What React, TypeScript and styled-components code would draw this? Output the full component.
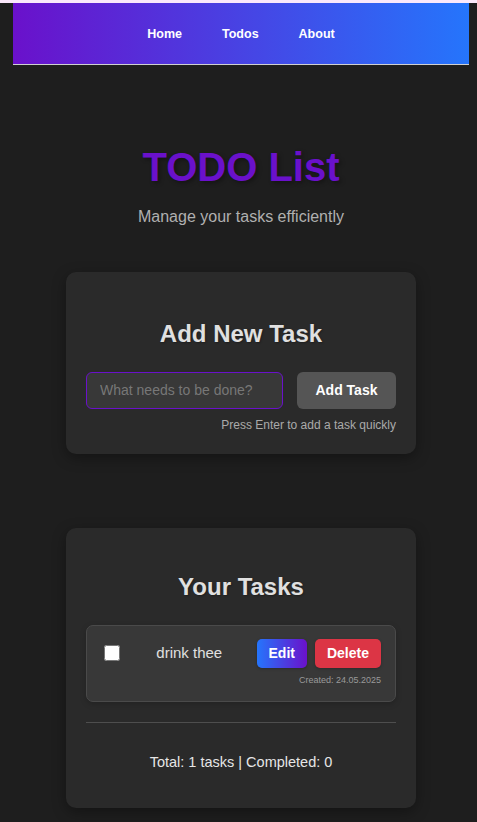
import React from "react";
import styled, { createGlobalStyle } from "styled-components";

const GlobalStyle = createGlobalStyle`
  html, body {
    margin: 0;
    padding: 0;
    background: #1e1e1e;
  }
  body {
    font-family: "Liberation Sans", Arial, sans-serif;
    line-height: 1.6;
    color: #e0e0e0;
  }
  * { box-sizing: border-box; }
`;

const TopStrip = styled.div`
  height: 3px;
  background: #fbe8fb;
`;

const Page = styled.div`
  margin: 0 8px 0 13px;
  padding-bottom: 40px;
`;

const Nav = styled.nav`
  height: 62px;
  padding-top: 2px;
  background: linear-gradient(to right, #6a11cb, #2575fc);
  border-bottom: 1px solid #d0d0d0;
  display: flex;
  align-items: center;
  justify-content: center;
  gap: 40px;
`;

const NavLink = styled.a`
  color: #ffffff;
  font-size: 12.5px;
  font-weight: 700;
  text-decoration: none;
  line-height: 1;
`;

const Header = styled.header`
  margin-top: 70px;
  text-align: center;
`;

const Title = styled.h1`
  margin: 0;
  font-size: 40px;
  line-height: 64px;
  font-weight: 700;
  color: #6a11cb;
  text-shadow: 2px 2px 4px rgba(0, 0, 0, 0.35);
`;

const Subtitle = styled.p`
  margin: 5px 0 0;
  font-size: 16px;
  color: #b0b0b0;
`;

const Card = styled.section<{ $top: number }>`
  width: 350px;
  margin: ${(p) => p.$top}px auto 0;
  background: #2a2a2a;
  border-radius: 10px;
  box-shadow: 0 4px 14px rgba(0, 0, 0, 0.35);
  padding: 20px 20px 19px;
`;

const CardTitle = styled.h2<{ $mt: number; $mb: number }>`
  margin: ${(p) => p.$mt}px 0 ${(p) => p.$mb}px;
  font-size: 24px;
  font-weight: 700;
  text-align: center;
  color: #e0e0e0;
  text-shadow: 1px 1px 2px rgba(0, 0, 0, 0.3);
`;

const FormRow = styled.div`
  display: flex;
  gap: 14px;
  height: 37px;
`;

const TaskInput = styled.input`
  flex: 1;
  min-width: 0;
  height: 100%;
  padding: 0 13px;
  background: #383838;
  border: 1px solid #6a11cb;
  border-radius: 6px;
  color: #e0e0e0;
  font-family: "Liberation Sans", Arial, sans-serif;
  font-size: 14px;
  outline: none;
  &::placeholder {
    color: #777777;
  }
`;

const AddButton = styled.button`
  height: 100%;
  width: 99px;
  padding: 0;
  background: #555555;
  border: none;
  border-radius: 6px;
  color: #ffffff;
  font-family: "Liberation Sans", Arial, sans-serif;
  font-size: 14px;
  font-weight: 700;
`;

const Hint = styled.p`
  margin: 7px 0 0;
  text-align: right;
  font-size: 12px;
  color: #aaaaaa;
`;

const TaskItem = styled.div`
  background: #383838;
  border: 1px solid #4a4a4a;
  border-radius: 7px;
  padding: 13px 14px 14px;
  box-shadow: 0 2px 6px rgba(0, 0, 0, 0.2);
`;

const TaskRow = styled.div`
  display: flex;
  align-items: center;
  height: 29px;
`;

const Check = styled.input`
  width: 16px;
  height: 16px;
  margin: 0 0 0 3px;
`;

const TaskText = styled.span`
  flex: 1;
  text-align: center;
  font-size: 15px;
  color: #e0e0e0;
  padding-left: 2px;
`;

const Actions = styled.div`
  display: flex;
  gap: 8px;
`;

const ActionButton = styled.button<{ $variant: "edit" | "delete" }>`
  height: 29px;
  padding: 0 12px;
  border: none;
  border-radius: 5px;
  color: #ffffff;
  font-family: "Liberation Sans", Arial, sans-serif;
  font-size: 14px;
  font-weight: 700;
  background: ${(p) =>
    p.$variant === "edit"
      ? "linear-gradient(to right, #2575fc, #6a11cb)"
      : "#dc3545"};
  box-shadow: 0 1px 3px rgba(0, 0, 0, 0.25);
`;

const Created = styled.div`
  margin-top: 5px;
  text-align: right;
  font-size: 9px;
  line-height: 14px;
  color: #9a9a9a;
`;

const Stats = styled.div`
  margin-top: 20px;
  border-top: 1px solid #4e4e4e;
  padding: 28px 0 15px;
  text-align: center;
  font-size: 14.5px;
  color: #e6e6e6;
`;

export default function App() {
  return (
    <>
      <GlobalStyle />
      <TopStrip />
      <Page>
        <Nav>
          <NavLink href="#">Home</NavLink>
          <NavLink href="#">Todos</NavLink>
          <NavLink href="#">About</NavLink>
        </Nav>
        <Header>
          <Title>TODO List</Title>
          <Subtitle>Manage your tasks efficiently</Subtitle>
        </Header>
        <Card $top={42}>
          <CardTitle $mt={23} $mb={19}>Add New Task</CardTitle>
          <FormRow>
            <TaskInput placeholder="What needs to be done?" />
            <AddButton>Add Task</AddButton>
          </FormRow>
          <Hint>Press Enter to add a task quickly</Hint>
        </Card>
        <Card $top={74}>
          <CardTitle $mt={20} $mb={18}>Your Tasks</CardTitle>
          <TaskItem>
            <TaskRow>
              <Check type="checkbox" />
              <TaskText>drink thee</TaskText>
              <Actions>
                <ActionButton $variant="edit">Edit</ActionButton>
                <ActionButton $variant="delete">Delete</ActionButton>
              </Actions>
            </TaskRow>
            <Created>Created: 24.05.2025</Created>
          </TaskItem>
          <Stats>Total: 1 tasks | Completed: 0</Stats>
        </Card>
      </Page>
    </>
  );
}
